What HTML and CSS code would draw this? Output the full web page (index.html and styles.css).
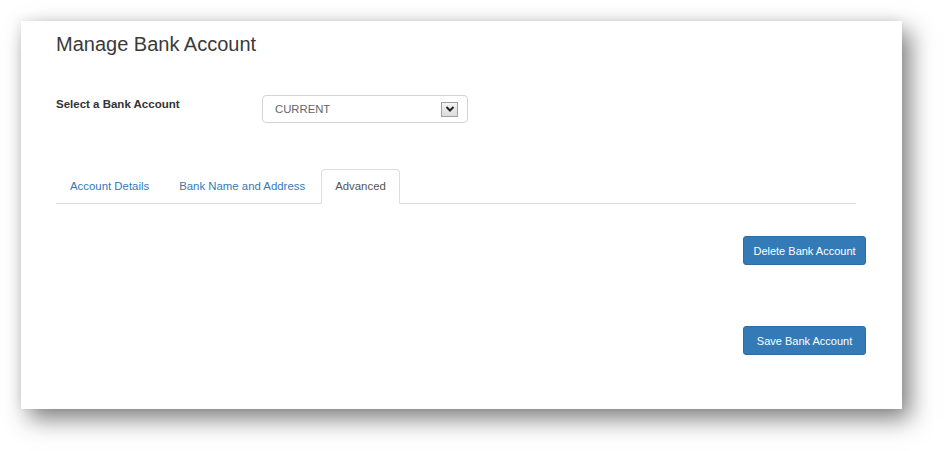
FILE: index.html
```html
<!DOCTYPE html>
<html lang="en">
<head>
  <meta charset="UTF-8">
  <meta name="viewport" content="width=device-width, initial-scale=1.0">
  <title>Manage Bank Account</title>
  <link rel="stylesheet" href="styles.css">
</head>
<body>

  <div class="panel">
    <h1 class="title">Manage Bank Account</h1>

    <div class="form-row">
      <label class="form-label" for="account">Select a Bank Account</label>
      <div class="select-box" id="account">
        <span class="select-value">CURRENT</span>
        <span class="select-arrow">
          <svg width="10" height="8" viewBox="0 0 10 8">
            <path d="M1.5 2 L5 5.5 L8.5 2" fill="none" stroke="#222" stroke-width="2"/>
          </svg>
        </span>
      </div>
    </div>

    <ul class="tabs">
      <li class="tab"><a href="#">Account Details</a></li>
      <li class="tab"><a href="#">Bank Name and Address</a></li>
      <li class="tab active"><a href="#">Advanced</a></li>
    </ul>

    <div class="actions">
      <button type="button" class="btn">Delete Bank Account</button>
      <button type="button" class="btn save">Save Bank Account</button>
    </div>
  </div>

</body>
</html>
```

FILE: styles.css
```css
html, body {
  height: 451px;
}

body {
  margin: 0;
  padding: 0;
  overflow: hidden;
  background-color: #fff;
  font-family: 'Liberation Sans', Arial, sans-serif;
}

.panel {
  box-sizing: border-box;
  width: 881px;
  height: 388px;
  margin: 21px 0 0 21px;
  padding: 11px 36px 0 35px;
  background-color: #fff;
  box-shadow: 8px 10px 22px rgba(0, 0, 0, 0.5), -2px -2px 10px rgba(0, 0, 0, 0.06);
}

.title {
  margin: 0;
  font-size: 20px;
  font-weight: normal;
  line-height: 24px;
  color: #3a3a3a;
}

.form-row {
  display: flex;
  align-items: flex-start;
  margin-top: 39px;
}

.form-label {
  width: 206px;
  padding-top: 1px;
  font-size: 11.5px;
  font-weight: bold;
  line-height: 16px;
  color: #333;
}

.select-box {
  box-sizing: border-box;
  display: flex;
  align-items: center;
  justify-content: space-between;
  width: 206px;
  height: 28px;
  padding: 0 9px 0 12px;
  border: 1px solid #d4d4d4;
  border-radius: 4px;
}

.select-value {
  font-size: 11.3px;
  color: #666;
}

.select-arrow {
  box-sizing: border-box;
  display: flex;
  align-items: center;
  justify-content: center;
  width: 17px;
  height: 15px;
  border: 1px solid #a0a0a0;
  background: linear-gradient(#f4f4f4, #dcdcdc);
}

.tabs {
  display: flex;
  list-style: none;
  width: 800px;
  margin: 46px 0 0 0;
  padding: 0;
  border-bottom: 1px solid #ddd;
}

.tab {
  margin-right: 2px;
  margin-bottom: -1px;
}

.tab a {
  display: block;
  box-sizing: border-box;
  height: 35px;
  padding: 0 13px;
  line-height: 33px;
  font-size: 11.4px;
  color: #337ab7;
  text-decoration: none;
  border: 1px solid transparent;
  border-radius: 4px 4px 0 0;
}

.tab.active a {
  color: #555;
  background-color: #fff;
  border-color: #ddd #ddd transparent;
}

.actions {
  display: flex;
  flex-direction: column;
  align-items: flex-end;
  margin-top: 32px;
}

.btn {
  width: 123px;
  height: 29px;
  padding: 0;
  font-family: 'Liberation Sans', Arial, sans-serif;
  font-size: 11px;
  color: #fff;
  background-color: #337ab7;
  border: 1px solid #2e6da4;
  border-radius: 3px;
  cursor: pointer;
}

.btn.save {
  margin-top: 61px;
}
```
